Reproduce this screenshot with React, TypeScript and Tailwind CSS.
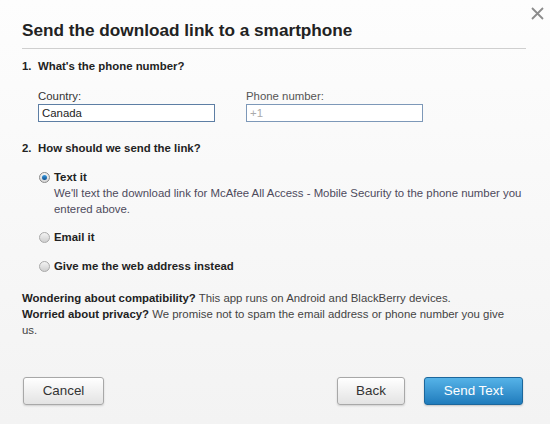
import React from "react";

function Radio({ checked }: { checked?: boolean }) {
  return (
    <span
      className={
        "relative inline-flex h-[11px] w-[11px] shrink-0 items-center justify-center rounded-full border " +
        (checked
          ? "border-[#8a8a8a] bg-gradient-to-b from-[#f4f4f4] to-[#d6d6d6]"
          : "border-[#a9a9a9] bg-gradient-to-b from-[#f3f3f3] to-[#cfcfcf]")
      }
    >
      {checked && (
        <span className="h-[5px] w-[5px] rounded-full bg-gradient-to-b from-[#3b9be0] to-[#0b4f8f]" />
      )}
    </span>
  );
}

export default function App() {
  return (
    <div
      className="relative h-[424px] w-[550px] overflow-hidden bg-gradient-to-b from-[#fdfdfd] to-[#f3f3f3] text-[#333]"
      style={{ fontFamily: '"Liberation Sans", Arial, sans-serif' }}
    >
      {/* close */}
      <svg
        className="absolute left-[531px] top-[7px]"
        width="13"
        height="13"
        viewBox="0 0 13 13"
      >
        <path d="M1 1 L12 12 M12 1 L1 12" stroke="#8c8c8c" strokeWidth="1.8" />
      </svg>

      <div className="pl-[22px] pr-[24px]">
        <div className="border-b border-[#cfcfcf] pt-[19px] pb-[7px] text-[17.2px] font-bold leading-[22px] text-[#222]">
          Send the download link to a smartphone
        </div>
      </div>

      <div className="pl-[22px] pr-[24px]">
        <div className="mt-[9px] flex text-[11.4px] font-bold leading-[16px] text-[#222]">
          <span className="w-[16px]">1.</span>
          <span>What's the phone number?</span>
        </div>

        <div className="mt-[14px] flex pl-[16px] text-[11.4px] leading-[16px]">
          <div className="w-[177px]">
            <div className="text-[#333]">Country:</div>
            <div className="flex h-[18px] w-[177px] items-center border border-[#5d7ea4] bg-white pl-[3px] text-[#222]">
              Canada
            </div>
          </div>
          <div className="ml-[31px] w-[177px]">
            <div className="text-[#555]">Phone number:</div>
            <div className="flex h-[18px] w-[177px] items-center border border-[#7d98b8] bg-white pl-[3px] text-[#aaa]">
              +1
            </div>
          </div>
        </div>

        <div className="mt-[18px] flex text-[11.4px] font-bold leading-[16px] text-[#222]">
          <span className="w-[16px]">2.</span>
          <span>How should we send the link?</span>
        </div>

        <div className="mt-[13px] pl-[17px] text-[11.4px] leading-[16px]">
          <div className="flex items-center gap-[4px]">
            <Radio checked />
            <span className="font-bold text-[#222]">Text it</span>
          </div>
          <div className="w-[490px] pl-[15px] text-[#4d4a5c]">
            We'll text the download link for McAfee All Access - Mobile Security to the phone number you entered above.
          </div>
          <div className="mt-[12px] flex items-center gap-[4px]">
            <Radio />
            <span className="font-bold text-[#222]">Email it</span>
          </div>
          <div className="mt-[13px] flex items-center gap-[4px]">
            <Radio />
            <span className="font-bold text-[#222]">Give me the web address instead</span>
          </div>
        </div>

        <div className="mt-[16px] w-[496px] text-[11.4px] leading-[16px] text-[#444]">
          <div>
            <span className="font-bold text-[#222]">Wondering about compatibility?</span> This app runs on Android and BlackBerry devices.
          </div>
          <div>
            <span className="font-bold text-[#222]">Worried about privacy?</span> We promise not to spam the email address or phone number you give us.
          </div>
        </div>
      </div>

      <div className="mt-[39px] flex items-center pl-[23px] pr-[27px] text-[13.4px]">
        <button className="h-[28px] w-[81px] rounded-[3px] border border-[#a8a8a8] bg-gradient-to-b from-[#ffffff] to-[#e3e3e3] text-[#333] shadow-[0_1px_2px_rgba(0,0,0,0.15)]">
          Cancel
        </button>
        <div className="flex-1" />
        <button className="h-[28px] w-[68px] rounded-[3px] border border-[#a8a8a8] bg-gradient-to-b from-[#ffffff] to-[#e3e3e3] text-[#333] shadow-[0_1px_2px_rgba(0,0,0,0.15)]">
          Back
        </button>
        <button className="ml-[19px] h-[28px] w-[99px] rounded-[3px] border border-[#1c679c] bg-gradient-to-b from-[#55b3e8] to-[#1f7cbc] text-white shadow-[0_1px_2px_rgba(0,0,0,0.2)]">
          Send Text
        </button>
      </div>
    </div>
  );
}
